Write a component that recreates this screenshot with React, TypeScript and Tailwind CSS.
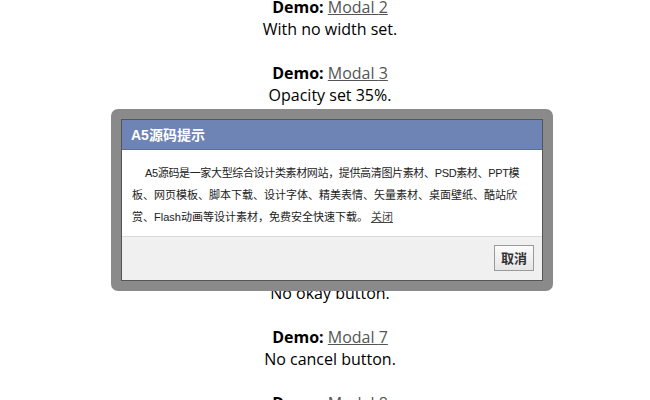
import React from "react";

const demos = [
  { n: 2, d: "With no width set." },
  { n: 3, d: "Opacity set 35%." },
  { n: 4, d: "Custom title set." },
  { n: 5, d: "Custom button text." },
  { n: 6, d: "No okay button." },
  { n: 7, d: "No cancel button." },
  { n: 8, d: "Custom callbacks." },
];

export default function App() {
  return (
    <div
      className="relative w-[650px] h-[400px] overflow-hidden bg-white text-black"
      style={{ fontFamily: '"Open Sans", "Noto Sans", sans-serif' }}
    >
      <div className="-mt-[4px] pl-[10px] flex flex-col items-center text-[16px] leading-[22px]">
        {demos.map((x, i) => (
          <div key={x.n} className={i > 0 ? "mt-[22px] text-center" : "text-center"}>
            <div>
              <b>Demo:</b>{" "}
              <a className="text-[#555] underline">Modal {x.n}</a>
            </div>
            <div>{x.d}</div>
          </div>
        ))}
      </div>

      <div className="absolute left-[111px] top-[109px] w-[442px] rounded-[7px] bg-[#8a8a8a] p-[10px]">
        <div className="border border-[#555] bg-white">
          <div
            className="h-[30px] bg-[#6d84b4] border-b border-[#5b6fa0] pl-[9px] flex items-center pt-[2px] text-white text-[14px] font-bold"
            style={{ fontFamily: '"Liberation Sans", "Noto Sans CJK SC", sans-serif' }}
          >
            A5源码提示
          </div>
          <div
            className="px-[10px] pt-[12px] pb-[8px] text-[11px] leading-[22px] text-[#222] whitespace-nowrap"
            style={{ fontFamily: '"Liberation Sans", "Noto Sans CJK SC", sans-serif' }}
          >
            <div className="pl-[13px] tracking-[-0.35px]">A5源码是一家大型综合设计类素材网站，提供高清图片素材、PSD素材、PPT模</div>
            <div>板、网页模板、脚本下载、设计字体、精美表情、矢量素材、桌面壁纸、酷站欣</div>
            <div>
              赏、Flash动画等设计素材，免费安全快速下载。{" "}
              <a className="text-[#444] underline">关闭</a>
            </div>
          </div>
          <div className="h-[44px] bg-[#f0f0f0] border-t border-[#d9d9d9] flex items-start justify-end pt-[8px] pr-[8px]">
            <button
              className="w-[40px] h-[26px] border border-[#9a9a9a] bg-gradient-to-b from-[#fbfbfb] to-[#e6e6e6] text-[13px] font-bold text-[#333] flex items-center justify-center"
              style={{ fontFamily: '"Noto Sans CJK SC", sans-serif' }}
            >
              取消
            </button>
          </div>
        </div>
      </div>
    </div>
  );
}
